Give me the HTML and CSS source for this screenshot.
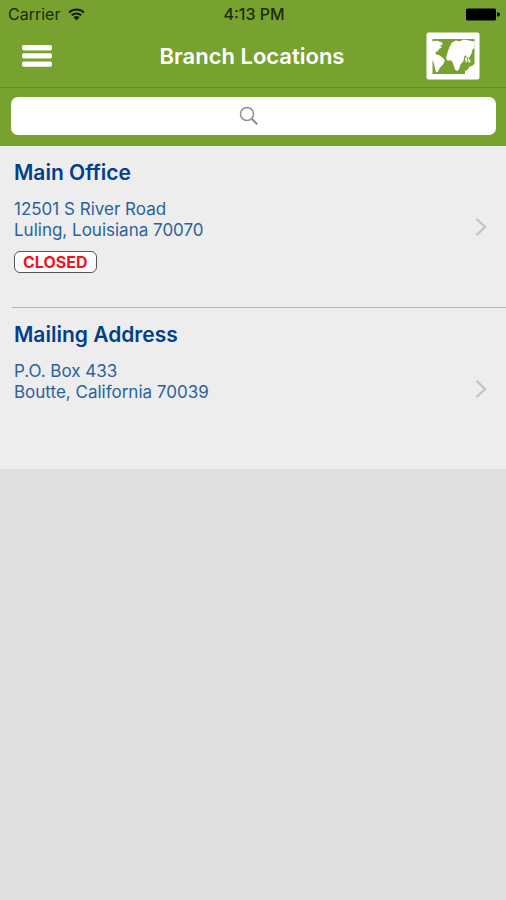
FILE: index.html
```html
<!DOCTYPE html>
<html lang="en">
<head>
	<meta charset="UTF-8">
	<meta name="viewport" content="width=device-width, initial-scale=1.0">
	<title>Branch Locations</title>
	<link rel="stylesheet" href="styles.css">
</head>
<body>
	<header class="header">
		<div class="status">
			<div class="carrier">
				<span>Carrier</span>
				<svg class="wifi" viewBox="0 0 17 13" aria-hidden="true">
					<path d="M1 4.6a10.8 10.8 0 0 1 15 0M3.7 7.3a7 7 0 0 1 9.6 0" />
					<path class="solid" d="M5.4 9.3a4.6 4.6 0 0 1 6.2 0L8.5 12.6z" />
				</svg>
			</div>
			<time class="clock">4:13 PM</time>
			<svg class="battery" viewBox="0 0 34 13" aria-hidden="true">
				<rect x="0" y="0.5" width="30" height="12" rx="1.5" />
				<path d="M31 4.5h1a1.6 1.6 0 0 1 0 4h-1z" />
			</svg>
		</div>
		<div class="navbar">
			<button class="icon-btn" aria-label="Menu">
				<svg class="menu" viewBox="0 0 30 22" aria-hidden="true">
					<rect width="30" height="5.4" rx="1.8" />
					<rect y="8.2" width="30" height="5.4" rx="1.8" />
					<rect y="16.4" width="30" height="5.4" rx="1.8" />
				</svg>
			</button>
			<h1 class="title">Branch Locations</h1>
			<button class="icon-btn map-btn" aria-label="Map">
				<svg class="map" viewBox="0 0 54 48" aria-hidden="true">
					<path fill-rule="evenodd" d="M2.5 .5h49a2 2 0 0 1 2 2v43a2 2 0 0 1-2 2h-49a2 2 0 0 1-2-2v-43a2 2 0 0 1 2-2zM6.5 7v35h42V7z" />
					<!-- americas -->
					<path d="M6 10q3-2 6-1l4 1.5.5 2.500-2.500 0 2 2.500-3 1.500-1.500 2.500-2 .5.5 2.500 3 .5 4 3 2 2.500-2 4-3 3-2 4-2 1-1-4-1-5-2-4z" />
					<!-- europe, africa and asia -->
					<path d="M22 19l1.500-4 2.500-4.500 4-2 3.500 1 4-2 11 2v6.500l-2 1.500-1 4-2 3.500-2 1-2-3-1.500 2-.5 4-3 3.500-1.500 5-2 1.500-2-1.500-2-6-1.500-3-4 0-1.500-2z" />
					<path d="M39 26l1.500-1 1 4-1.500 2zM42 25l2 3 .5 3-2-1z" />
					<!-- australia -->
					<path d="M39 42l0-3 3-1.500 1.500-3 3-.5 1-2 2 1v9z" />
				</svg>
			</button>
		</div>
		<form class="search" role="search">
			<input class="search-input" type="search" aria-label="Search branches">
			<svg class="search-icon" viewBox="0 0 20 20" aria-hidden="true">
				<circle cx="8" cy="8" r="6.5" />
				<path class="handle" d="M13 13l5.2 5.2" />
			</svg>
		</form>
	</header>

	<main>
		<ul class="branches">
			<li>
				<a class="branch" href="#main-office">
					<div class="details">
						<h2 class="name">Main Office</h2>
						<p class="address">12501 S River Road<br>Luling, Louisiana 70070</p>
						<span class="badge">CLOSED</span>
					</div>
					<svg class="chevron" viewBox="0 0 12 20" aria-hidden="true"><path d="M1.5 1.8L10 10l-8.5 8.2" /></svg>
				</a>
			</li>
			<li>
				<a class="branch" href="#mailing-address">
					<div class="details">
						<h2 class="name">Mailing Address</h2>
						<p class="address">P.O. Box 433<br>Boutte, California 70039</p>
					</div>
					<svg class="chevron" viewBox="0 0 12 20" aria-hidden="true"><path d="M1.5 1.8L10 10l-8.5 8.2" /></svg>
				</a>
			</li>
		</ul>
	</main>
</body>
</html>
```
FILE: styles.css
```css
:root {
	--green: #78a22f;
	--green-dark: #658b22;
	--navy: #023f8b;
	--blue: #2a629e;
}

* { box-sizing: border-box; padding: 0; margin: 0; }

body {
	min-height: 100vh;
	background: #e2dfe2;
	font-family: Inter, "Liberation Sans", sans-serif;
}

.header {
	background: var(--green);
}

.status {
	display: grid;
	grid-template-columns: 1fr auto 1fr;
	align-items: center;
	height: 28px;
	padding: 0 6px 0 8px;
	font-size: 16px;
	color: #1c2a08;
}

.carrier {
	display: flex;
	align-items: center;
	gap: 8px;
}

.wifi {
	width: 17px;
	height: 13px;
	fill: none;
	stroke: #14200a;
	stroke-width: 2;
}
.wifi .solid { fill: #14200a; stroke: none; }

.clock {
	font-weight: 500;
}

.battery {
	width: 34px;
	height: 13px;
	justify-self: end;
	fill: #000;
}

.navbar {
	display: grid;
	grid-template-columns: 1fr auto 1fr;
	align-items: center;
	height: 60px;
	padding: 0 26px 3px 22px;
	border-bottom: 1px solid var(--green-dark);
}

.title {
	padding-left: 2px;
	font-size: 22px;
	font-weight: 600;
	line-height: 28px;
	color: #fff;
}

.icon-btn {
	display: flex;
	justify-self: start;
	border: none;
	background: none;
	cursor: pointer;
}

.map-btn { justify-self: end; }

.menu {
	width: 30px;
	height: 22px;
	fill: #fff;
}

.map {
	width: 54px;
	height: 48px;
	fill: #fff;
}

.search {
	position: relative;
	padding: 9px 10px 11px 11px;
}

.search-input {
	display: block;
	width: 100%;
	height: 38px;
	padding: 0 16px;
	border: none;
	border-radius: 7px;
	background: #fff;
	font: inherit;
	font-size: 18px;
}

/* sits over the middle of the empty field */
.search-icon {
	position: absolute;
	top: 18px;
	left: calc(50% - 14px);
	width: 20px;
	height: 20px;
	fill: none;
	stroke: #8e8e90;
	stroke-width: 1.5;
	pointer-events: none;
}
.search-icon .handle { stroke-width: 2.2; }

.branches {
	list-style: none;
	background: #ededed;
}

.branches li + li::before {
	content: "";
	display: block;
	height: 1px;
	margin-left: 12px;
	background: #b4b4b6;
}

.branch {
	display: flex;
	align-items: center;
	justify-content: space-between;
	min-height: 161px;
	padding: 0 19px 0 14px;
	color: var(--blue);
	text-decoration: none;
}

.details {
	align-self: flex-start;
	padding-top: 13px;
}

.name {
	font-size: 21px;
	font-weight: 600;
	line-height: 28px;
	color: var(--navy);
}

.address {
	margin-top: 12px;
	font-size: 17px;
	line-height: 21px;
}

.badge {
	display: block;
	width: fit-content;
	margin-top: 10px;
	padding: 0 8px;
	border: 1px solid #555;
	border-radius: 6px;
	background: #fff;
	font-size: 16px;
	font-weight: 700;
	line-height: 20px;
	color: #f3121d;
}

.chevron {
	width: 12px;
	height: 20px;
	fill: none;
	stroke: #c5c5c7;
	stroke-width: 2.4;
}
```
